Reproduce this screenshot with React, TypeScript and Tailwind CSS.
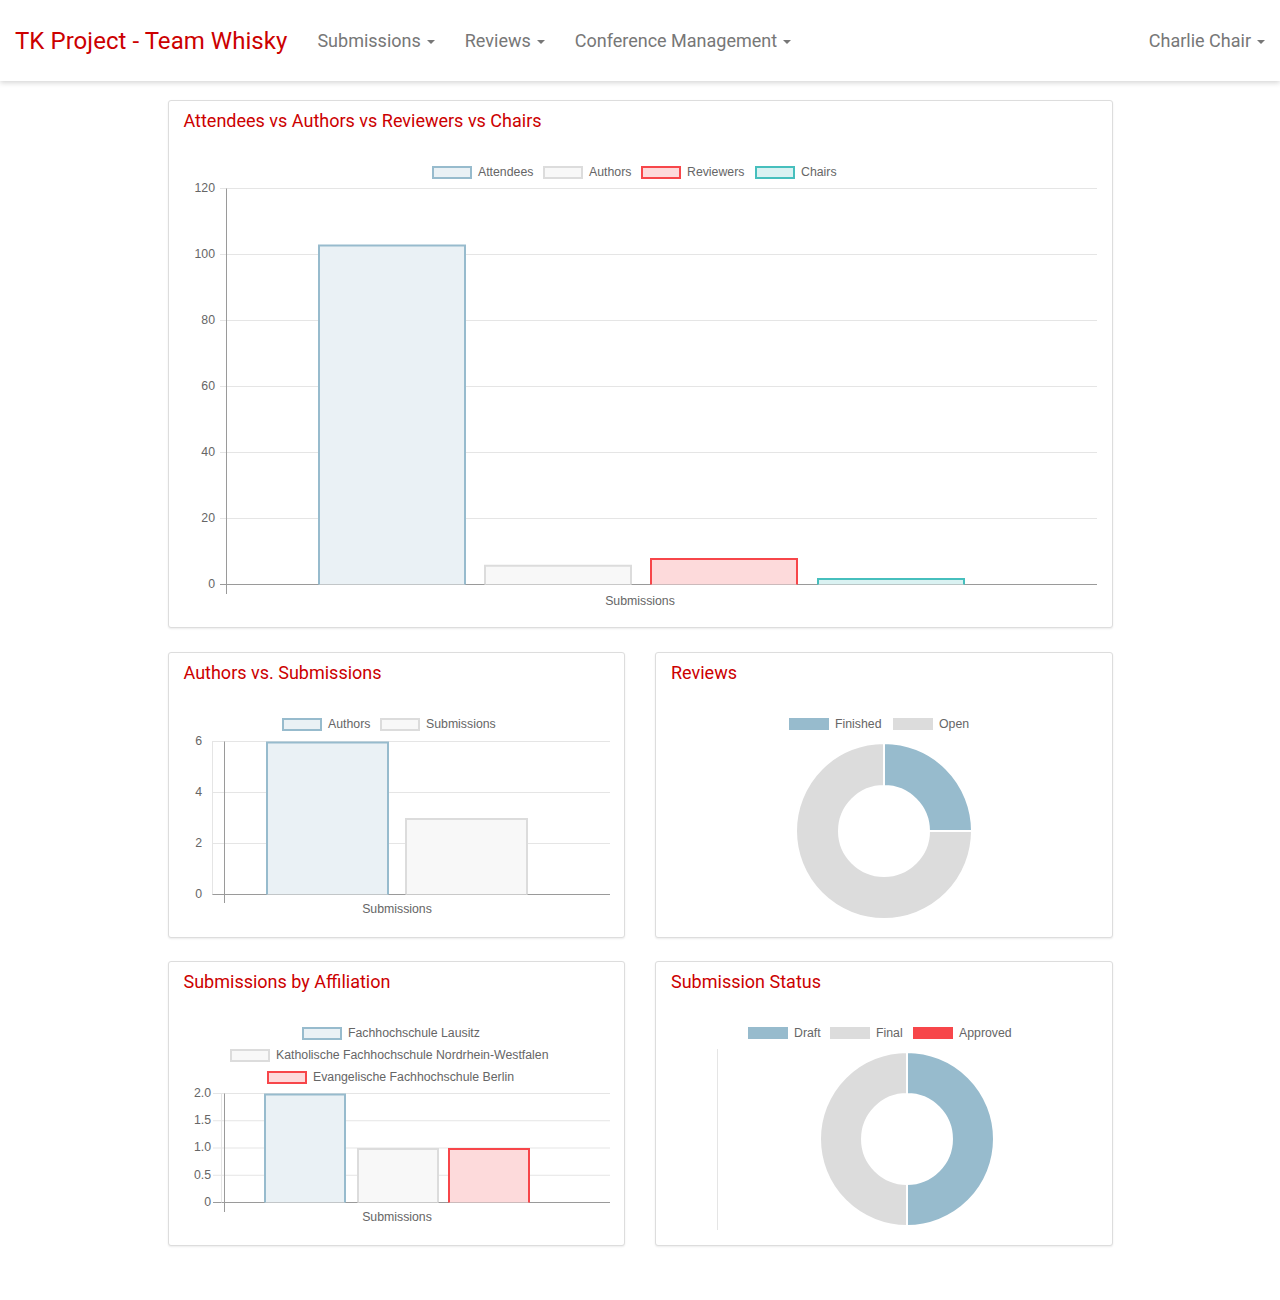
import React from 'react';

const RED = '#cc0000';
const FONT = '"Liberation Sans", Arial, sans-serif';
const FS = 12.3;

const COLORS = {
    blue: { fill: '#eaf1f5', stroke: '#97bbcd', solid: '#97bbcd' },
    gray: { fill: '#f8f8f8', stroke: '#dcdcdc', solid: '#dcdcdc' },
    red: { fill: '#fddadb', stroke: '#f7464a', solid: '#f7464a' },
    teal: { fill: '#daf2f2', stroke: '#46bfbd', solid: '#46bfbd' },
};

type ColorKey = keyof typeof COLORS;

const Caret = () => (
    <span className="inline-block ml-[6px] align-middle w-0 h-0 border-l-[4px] border-r-[4px] border-t-[4px] border-l-transparent border-r-transparent border-t-[#777]" />
);

const Navbar = () => (
    <nav className="h-[81px] bg-white shadow-[0_2px_5px_rgba(0,0,0,0.16)] flex items-center pl-[15px] pr-[15px] relative z-10">
        <span className="text-[24px] leading-none text-[#cc0000] mr-[30px] tracking-[0.05px]">TK Project - Team Whisky</span>
        <ul className="flex items-center gap-[30px] text-[18px] text-[#777]">
            <li>Submissions<Caret /></li>
            <li>Reviews<Caret /></li>
            <li>Conference Management<Caret /></li>
        </ul>
        <span className="ml-auto text-[18px] text-[#777]">Charlie Chair<Caret /></span>
    </nav>
);

const Card = ({ title, height, children }: { title: string; height: number; children: React.ReactNode }) => (
    <div
        className="bg-white border border-[#dddddd] rounded-[3px] shadow-[0_1px_2px_rgba(0,0,0,0.08)] overflow-hidden"
        style={{ height }}
    >
        <h2 className="pt-[9px] px-[15px] text-[18px] leading-[22px]" style={{ color: RED }}>
            {title}
        </h2>
        {children}
    </div>
);

// legend item: box + label
const Legend = ({ x, y, color, label, solid }: { x: number; y: number; color: ColorKey; label: string; solid?: boolean }) => {
    const c = COLORS[color];
    return (
        <g>
            {solid ? (
                <rect x={x} y={y - 6} width={40} height={12} fill={c.solid} />
            ) : (
                <rect x={x + 1} y={y - 5} width={38} height={11} fill={c.fill} stroke={c.stroke} strokeWidth={2} />
            )}
            <text x={x + 46} y={y + 1} dominantBaseline="middle" fontSize={FS} fill="#666" fontFamily={FONT}>
                {label}
            </text>
        </g>
    );
};

const Bar = ({ x, w, top, base, color }: { x: number; w: number; top: number; base: number; color: ColorKey }) => {
    const c = COLORS[color];
    return (
        <path
            d={`M${x + 1} ${base} L${x + 1} ${top + 1} L${x + w - 1} ${top + 1} L${x + w - 1} ${base}`}
            fill={c.fill}
            stroke={c.stroke}
            strokeWidth={2}
        />
    );
};

const Axis = ({
    axisX,
    gridFrom,
    gridTo,
    ticks,
    labelX,
    axisBottom,
    xLabelX,
    xLabelY,
    leftGrid,
}: {
    axisX: number;
    gridFrom: number;
    gridTo: number;
    ticks: { y: number; label: string }[];
    labelX: number;
    axisBottom: number;
    xLabelX: number;
    xLabelY: number;
    leftGrid?: number;
}) => {
    const top = ticks[0].y;
    const base = ticks[ticks.length - 1].y;
    return (
        <g fontFamily={FONT} fontSize={FS} fill="#666">
            {ticks.map((t, i) => (
                <g key={t.label}>
                    <line
                        x1={gridFrom}
                        x2={gridTo}
                        y1={t.y}
                        y2={t.y}
                        stroke={i === ticks.length - 1 ? '#9a9a9a' : '#e5e5e5'}
                        strokeWidth={1}
                    />
                    <text x={labelX} y={t.y} textAnchor="end" dominantBaseline="middle">
                        {t.label}
                    </text>
                </g>
            ))}
            {leftGrid !== undefined && <line x1={leftGrid} x2={leftGrid} y1={top} y2={base} stroke="#e5e5e5" />}
            <line x1={axisX} x2={axisX} y1={top} y2={axisBottom} stroke="#9a9a9a" />
            <text x={xLabelX} y={xLabelY} textAnchor="middle" dominantBaseline="middle">
                Submissions
            </text>
        </g>
    );
};

const polar = (cx: number, cy: number, r: number, deg: number) => {
    const a = ((deg - 90) * Math.PI) / 180;
    return [cx + r * Math.cos(a), cy + r * Math.sin(a)];
};

const arc = (cx: number, cy: number, r0: number, r1: number, a0: number, a1: number) => {
    const large = a1 - a0 > 180 ? 1 : 0;
    const [x1, y1] = polar(cx, cy, r1, a0);
    const [x2, y2] = polar(cx, cy, r1, a1);
    const [x3, y3] = polar(cx, cy, r0, a1);
    const [x4, y4] = polar(cx, cy, r0, a0);
    return `M${x1} ${y1} A${r1} ${r1} 0 ${large} 1 ${x2} ${y2} L${x3} ${y3} A${r0} ${r0} 0 ${large} 0 ${x4} ${y4} Z`;
};

const Donut = ({ cx, cy, r0, r1, parts }: { cx: number; cy: number; r0: number; r1: number; parts: { value: number; color: string }[] }) => {
    const total = parts.reduce((s, p) => s + p.value, 0);
    let acc = 0;
    return (
        <g>
            {parts.map((p, i) => {
                const a0 = (acc / total) * 360;
                acc += p.value;
                const a1 = (acc / total) * 360;
                if (a1 - a0 <= 0) return null;
                return <path key={i} d={arc(cx, cy, r0, r1, a0, a1)} fill={p.color} stroke="#fff" strokeWidth={2} />;
            })}
        </g>
    );
};

const ParticipantsChart = () => {
    const base = 452.5;
    const k = 3.3;
    return (
        <svg width="100%" height={495} className="block">
            <Legend x={263} y={40} color="blue" label="Attendees" />
            <Legend x={374} y={40} color="gray" label="Authors" />
            <Legend x={472} y={40} color="red" label="Reviewers" />
            <Legend x={586} y={40} color="teal" label="Chairs" />
            <Axis
                axisX={57.5}
                gridFrom={51}
                gridTo={928}
                labelX={46}
                axisBottom={462}
                xLabelX={471}
                xLabelY={470}
                ticks={[120, 100, 80, 60, 40, 20, 0].map((v) => ({ y: base - v * k, label: String(v) }))}
            />
            <Bar x={149} w={148} top={base - 103 * k} base={base} color="blue" />
            <Bar x={315} w={148} top={base - 6 * k} base={base} color="gray" />
            <Bar x={481} w={148} top={base - 8 * k} base={base} color="red" />
            <Bar x={648} w={148} top={base - 2 * k} base={base} color="teal" />
        </svg>
    );
};

const AuthorsChart = () => {
    const base = 210.5;
    const k = 25.5;
    return (
        <svg width="100%" height={253} className="block">
            <Legend x={113} y={40} color="blue" label="Authors" />
            <Legend x={211} y={40} color="gray" label="Submissions" />
            <Axis
                axisX={55.5}
                gridFrom={43}
                gridTo={441}
                labelX={33}
                axisBottom={219}
                xLabelX={228}
                xLabelY={226}
                leftGrid={43.5}
                ticks={[6, 4, 2, 0].map((v) => ({ y: base - v * k, label: String(v) }))}
            />
            <Bar x={97} w={123} top={base - 6 * k} base={base} color="blue" />
            <Bar x={236} w={123} top={base - 3 * k} base={base} color="gray" />
        </svg>
    );
};

const ReviewsChart = () => (
    <svg width="100%" height={253} className="block">
        <Legend x={133} y={40} color="blue" label="Finished" solid />
        <Legend x={237} y={40} color="gray" label="Open" solid />
        <Donut
            cx={228}
            cy={147}
            r0={45}
            r1={88}
            parts={[
                { value: 1, color: '#97bbcd' },
                { value: 3, color: '#dcdcdc' },
            ]}
        />
    </svg>
);

const AffiliationChart = () => {
    const base = 209.5;
    const k = 54.5;
    return (
        <svg width="100%" height={252} className="block">
            <Legend x={133} y={40} color="blue" label="Fachhochschule Lausitz" />
            <Legend x={61} y={62} color="gray" label="Katholische Fachhochschule Nordrhein-Westfalen" />
            <Legend x={98} y={84} color="red" label="Evangelische Fachhochschule Berlin" />
            <Axis
                axisX={55.5}
                gridFrom={44}
                gridTo={441}
                labelX={42}
                axisBottom={219}
                xLabelX={228}
                xLabelY={225}
                leftGrid={52.5}
                ticks={[
                    { y: base - 2 * k, label: '2.0' },
                    { y: base - 1.5 * k, label: '1.5' },
                    { y: base - 1 * k, label: '1.0' },
                    { y: base - 0.5 * k, label: '0.5' },
                    { y: base, label: '0' },
                ]}
            />
            <Bar x={95} w={82} top={base - 2 * k} base={base} color="blue" />
            <Bar x={188} w={82} top={base - 1 * k} base={base} color="gray" />
            <Bar x={279} w={82} top={base - 1 * k} base={base} color="red" />
        </svg>
    );
};

const StatusChart = () => (
    <svg width="100%" height={252} className="block">
        <Legend x={92} y={40} color="blue" label="Draft" solid />
        <Legend x={174} y={40} color="gray" label="Final" solid />
        <Legend x={257} y={40} color="red" label="Approved" solid />
        <line x1={61.5} x2={61.5} y1={56} y2={237} stroke="#e5e5e5" />
        <Donut
            cx={251}
            cy={146}
            r0={45}
            r1={87}
            parts={[
                { value: 1, color: '#97bbcd' },
                { value: 1, color: '#dcdcdc' },
                { value: 0, color: '#f7464a' },
            ]}
        />
    </svg>
);

export default function App() {
    return (
        <div className="min-h-[1300px] bg-white" style={{ fontFamily: 'Roboto, "Noto Sans", sans-serif' }}>
            <Navbar />
            <main className="w-[945px] mx-auto pt-[19px] flex flex-col">
                <Card title="Attendees vs Authors vs Reviewers vs Chairs" height={528}>
                    <ParticipantsChart />
                </Card>
                <div className="grid grid-cols-2 gap-[30px] mt-[24px]">
                    <Card title="Authors vs. Submissions" height={286}>
                        <AuthorsChart />
                    </Card>
                    <Card title="Reviews" height={286}>
                        <ReviewsChart />
                    </Card>
                </div>
                <div className="grid grid-cols-2 gap-[30px] mt-[23px]">
                    <Card title="Submissions by Affiliation" height={285}>
                        <AffiliationChart />
                    </Card>
                    <Card title="Submission Status" height={285}>
                        <StatusChart />
                    </Card>
                </div>
            </main>
        </div>
    );
}
